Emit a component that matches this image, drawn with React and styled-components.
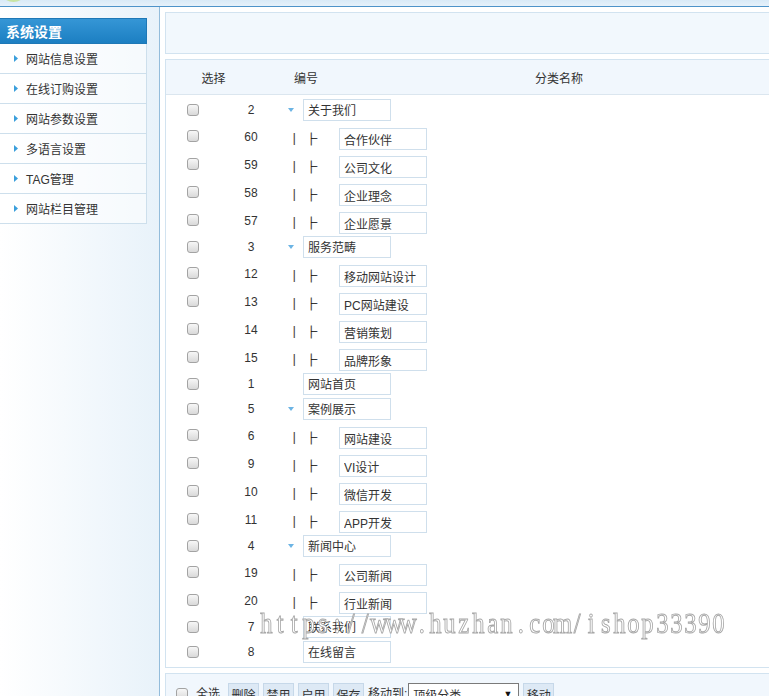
import React from "react";
import styled, { createGlobalStyle } from "styled-components";

const Global = createGlobalStyle`
  html, body { margin: 0; padding: 0; overflow: hidden; background: #fff; }
  body { font-family: "Liberation Sans", "Noto Sans CJK SC", sans-serif; font-size: 12px; color: #333; }
  * { box-sizing: border-box; }
`;

const Page = styled.div`
  position: relative;
  width: 900px;
  min-height: 696px;
`;

const TopStrip = styled.div`
  position: relative;
  height: 7px;
  background: linear-gradient(#d9eaf7, #e6f1fa);
  border-bottom: 1px solid #4d93c9;
  overflow: hidden;
`;

const Logo = styled.div`
  position: absolute;
  left: 4px;
  top: -10px;
  width: 19px;
  height: 12px;
  border-radius: 50%;
  background: #c8e4a4;
`;

const Body = styled.div`
  display: flex;
  align-items: stretch;
  min-height: 700px;
`;

const Sidebar = styled.div`
  width: 160px;
  flex: none;
  padding-top: 11px;
  background: linear-gradient(to right, #ffffff 0%, #f6fafd 40%, #e8f2fa 100%);
  border-right: 1px solid #93bcdb;
`;

const SideHead = styled.div`
  width: 147px;
  height: 26px;
  line-height: 26px;
  padding-left: 6px;
  color: #fff;
  font-weight: bold;
  font-size: 14px;
  background: linear-gradient(#3596d6, #1c7fc2);
  border: 1px solid #1e78b6;
  border-left: none;
`;

const SideItem = styled.div`
  width: 147px;
  height: 30px;
  display: flex;
  align-items: center;
  padding-left: 14px;
  border-right: 1px solid #cddfec;
  border-bottom: 1px solid #cddfec;
  background: rgba(255, 255, 255, 0.55);
  color: #333;
  font-size: 12px;
`;

const Arrow = styled.svg`
  width: 4px;
  height: 7px;
  margin-right: 8px;
  flex: none;
`;

const Main = styled.div`
  flex: 1;
  padding: 5px 0 0 5px;
  display: flex;
  flex-direction: column;
  gap: 5px;
`;

const TopPanel = styled.div`
  height: 42px;
  border: 1px solid #d2e3f0;
  background: #f2f8fd;
`;

const TablePanel = styled.div`
  border: 1px solid #d2e3f0;
  background: #fff;
  padding-bottom: 3px;
`;

const HeadRow = styled.div`
  display: flex;
  height: 35px;
  align-items: center;
  background: #f1f7fd;
  border-bottom: 1px solid #dbe6ef;
`;

const HeadCell = styled.div`
  width: ${(p) => p.$w}px;
  text-align: center;
  flex: none;
`;

const Rows = styled.div`
  padding-top: 2px;
`;

const Row = styled.div`
  display: flex;
  height: ${(p) => (p.$child ? 28 : 25)}px;
  align-items: center;
`;

const CheckCell = styled.div`
  width: 54px;
  flex: none;
  display: flex;
  justify-content: center;
`;

const Check = styled.input.attrs({ type: "checkbox" })`
  appearance: none;
  -webkit-appearance: none;
  width: 12px;
  height: 12px;
  margin: 0;
  border: 1px solid #a3a3a3;
  border-radius: 3px;
  background: linear-gradient(#f7f7f7, #d9d9d9);
`;

const NumCell = styled.div`
  width: 62px;
  flex: none;
  text-align: center;
  font-size: 12px;
  padding-top: ${(p) => (p.$child ? 2 : 0)}px;
`;

const NameCell = styled.div`
  flex: 1;
  align-self: stretch;
  display: flex;
  align-items: ${(p) => (p.$child ? "flex-end" : "center")};
  padding-left: 6px;
`;

const Caret = styled.svg`
  width: 6px;
  height: 4px;
  margin-right: 9px;
  flex: none;
`;

const Spacer = styled.span`
  width: 15px;
  flex: none;
`;

const Tree = styled.span`
  height: 22px;
  display: flex;
  align-items: center;
  gap: 5px;
  margin-right: 22px;
  font-family: "Noto Sans CJK SC", sans-serif;
  font-size: 12px;
  font-weight: 700;
  line-height: 12px;
  color: #000;
  text-shadow: 0.5px 0 0 #000;
`;

const TreeGlyph = styled.span`
  width: 12px;
  text-align: center;
`;

const NameInput = styled.input`
  width: 88px;
  height: 22px;
  margin: 0;
  padding: 0 0 0 4px;
  border: 1px solid #cfdfec;
  background: #fff;
  font-family: "Liberation Sans", "Noto Sans CJK SC", sans-serif;
  font-size: 12px;
  color: #333;
  outline: none;
`;

const Toolbar = styled.div`
  height: 40px;
  border: 1px solid #d2e3f0;
  background: #f1f7fd;
  display: flex;
  align-items: flex-start;
  padding: 9px 0 0 10px;
  gap: 4px;
`;

const ToolCheck = styled(Check)`
  margin-top: 5px;
  margin-right: 4px;
`;

const Label = styled.span`
  line-height: 22px;
  margin-right: ${(p) => p.$mr || 0}px;
`;

const Btn = styled.button`
  width: 31px;
  height: 22px;
  padding: 0;
  border: 1px solid #c6d8e9;
  background: #dde9f5;
  font-family: "Liberation Sans", "Noto Sans CJK SC", sans-serif;
  font-size: 12px;
  color: #333;
`;

const FakeSelect = styled.div`
  width: 111px;
  height: 22px;
  display: flex;
  align-items: center;
  justify-content: space-between;
  padding: 0 6px 0 4px;
  border: 1px solid #7a7a7a;
  background: #fff;
`;

const SelArrow = styled.span`
  font-size: 9px;
  color: #111;
`;

const Watermark = styled.div`
  position: absolute;
  left: 259px;
  top: 608px;
  display: flex;
  font-family: "Liberation Serif", serif;
  font-size: 30px;
  line-height: 30px;
  color: #fff;
  -webkit-text-stroke: 1px #a8a8a8;
  white-space: nowrap;
  pointer-events: none;
  filter: grayscale(1);
`;

const WmCell = styled.span`
  width: 14.15px;
  display: flex;
  justify-content: center;
`;

const WmChar = styled.span`
  display: inline-block;
  transform: scaleX(0.82);
`;

const menu = ["网站信息设置", "在线订购设置", "网站参数设置", "多语言设置", "TAG管理", "网站栏目管理"];

const rows = [
  [2, "关于我们", 0],
  [60, "合作伙伴", 1],
  [59, "公司文化", 1],
  [58, "企业理念", 1],
  [57, "企业愿景", 1],
  [3, "服务范畴", 0],
  [12, "移动网站设计", 1],
  [13, "PC网站建设", 1],
  [14, "营销策划", 1],
  [15, "品牌形象", 1],
  [1, "网站首页", 2],
  [5, "案例展示", 0],
  [6, "网站建设", 1],
  [9, "VI设计", 1],
  [10, "微信开发", 1],
  [11, "APP开发", 1],
  [4, "新闻中心", 0],
  [19, "公司新闻", 1],
  [20, "行业新闻", 1],
  [7, "联系我们", 2],
  [8, "在线留言", 2],
];

const watermark = "https://www.huzhan.com/ishop33390";

export default function App() {
  return (
    <Page>
      <Global />
      <TopStrip>
        <Logo />
      </TopStrip>
      <Body>
        <Sidebar>
          <SideHead>系统设置</SideHead>
          {menu.map((m) => (
            <SideItem key={m}>
              <Arrow viewBox="0 0 4 7">
                <path d="M0 0 L4 3.5 L0 7 Z" fill="#3a9fdc" />
              </Arrow>
              {m}
            </SideItem>
          ))}
        </Sidebar>
        <Main>
          <TopPanel />
          <TablePanel>
            <HeadRow>
              <HeadCell $w={95}>选择</HeadCell>
              <HeadCell $w={90}>编号</HeadCell>
              <HeadCell $w={416}>分类名称</HeadCell>
            </HeadRow>
            <Rows>
              {rows.map(([id, name, kind]) => (
                <Row key={id} $child={kind === 1}>
                  <CheckCell>
                    <Check />
                  </CheckCell>
                  <NumCell $child={kind === 1}>{id}</NumCell>
                  <NameCell $child={kind === 1}>
                    {kind === 0 && (
                      <Caret viewBox="0 0 6 4">
                        <path d="M0 0 L6 0 L3 4 Z" fill="#6cb4e4" />
                      </Caret>
                    )}
                    {kind === 2 && <Spacer />}
                    {kind === 1 && (
                      <Tree>
                        <TreeGlyph>│</TreeGlyph>
                        <TreeGlyph>├</TreeGlyph>
                      </Tree>
                    )}
                    <NameInput defaultValue={name} />
                  </NameCell>
                </Row>
              ))}
            </Rows>
          </TablePanel>
          <Toolbar>
            <ToolCheck />
            <Label $mr={4}>全选</Label>
            <Btn>删除</Btn>
            <Btn>禁用</Btn>
            <Btn>启用</Btn>
            <Btn>保存</Btn>
            <Label $mr={-3}>移动到:</Label>
            <FakeSelect>
              <span>顶级分类</span>
              <SelArrow>▼</SelArrow>
            </FakeSelect>
            <Btn>移动</Btn>
          </Toolbar>
        </Main>
      </Body>
      <Watermark>
        {watermark.split("").map((c, i) => (
          <WmCell key={i}>
            <WmChar>{c}</WmChar>
          </WmCell>
        ))}
      </Watermark>
    </Page>
  );
}
